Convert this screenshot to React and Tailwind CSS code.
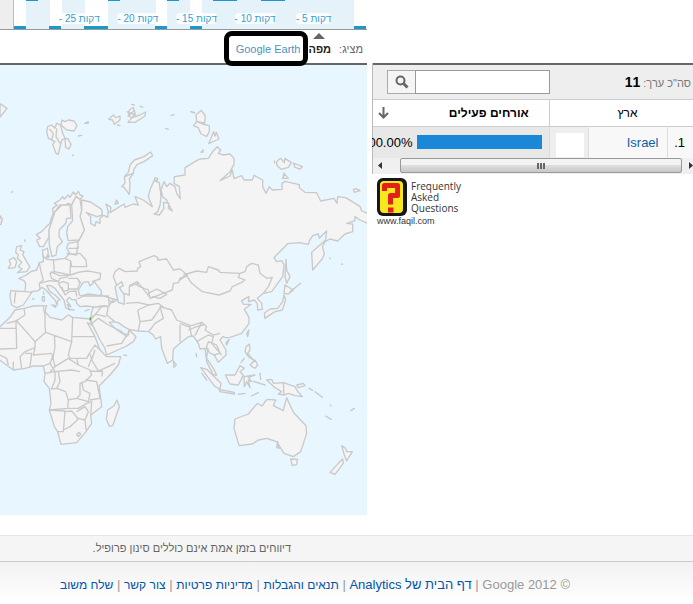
const chartLabels = ['25', '20', '15', '10', '5'];

const footerLinks = [
  'תנאים והגבלות',
  'מדיניות פרטיות',
  'צור קשר',
  'שלח משוב',
];

function RealtimeChart() {
  return (
    <div className="flex h-[30px] border-b border-[#999] bg-[#eee]">
      <div className="relative ml-[13px] flex-1 border-l border-[#bbb] bg-white">
        <svg className="block h-[29px] w-full" viewBox="0 0 353 29" preserveAspectRatio="none" shapeRendering="crispEdges">
          <path fill="#e5f2f9" d="M12 0h24v29H12zM48 0h23v29H48zM94 0h48v29H94zM153 0h23v29H153zM188 0h152v29H188z" />
          <path
            fill="#058dc7"
            fillOpacity="0.9"
            d="M0 26h12v3H0zM35 26h12v3H35zM70 26h24v3H70zM141 26h12v3H141zM176 26h12v3H176zM340 26h12v3H340zM12 0h12v1H12zM94 0h12v1H94zM153 0h12v1H153zM199 0h24v1H199zM247 0h24v1H247z"
          />
        </svg>
        <div className="absolute inset-0 grid grid-cols-5 pt-3 pr-6 pl-9 text-center text-[10px] leading-[14px] text-[#3a9fcb]">
          {chartLabels.map((n) => (
            <span key={n} dir="rtl">
              <span className="rounded-sm bg-white/80">דקות {n} -</span>
            </span>
          ))}
        </div>
      </div>
    </div>
  );
}

function MapTabs() {
  return (
    <nav dir="rtl" className="flex h-[35px] items-center gap-2 border-b-2 border-[#666] pt-1.5 pr-1 text-[11px]">
      <span className="text-[#666]">מציג:</span>
      <a href="#map" className="relative font-bold text-[#222]">
        <svg className="absolute -top-2 left-1 h-[6px] w-3" viewBox="0 0 12 6">
          <path d="M6 0L12 6H0z" fill="#666" />
        </svg>
        מפה
      </a>
      <a href="#earth" className="relative text-[#5092c4]">
        Google Earth
        <span className="absolute -top-[10px] -right-[7px] -bottom-2 -left-3 rounded-lg border-[5px] border-black" />
      </a>
    </nav>
  );
}

function WorldMap() {
  return (
    <svg className="block w-full bg-[#e8f6ff]" viewBox="0 0 1101 1350" role="img" aria-label="World map">
      <g fill="#f4f4f4" stroke="#c9c9c9" strokeWidth="4" strokeLinejoin="round">
        {/* Eurasia */}
        <path d="M245 405L272 411 305 433 307 450 290 455 258 442 272 455 272 475 285 483 288 470 300 475 300 460 312 451 323 457 325 440 318 417 333 427 330 443 372 417 375 427 400 417 415 420 405 395 430 405 457 425 445 395 450 375 462 347 478 353 483 395 480 420 473 440 462 447 478 450 492 430 490 412 507 415 505 430 517 438 507 420 500 405 488 395 483 375 492 350 500 365 510 355 525 365 530 385 541 402 538 365 522 355 523 335 555 330 555 308 590 287 600 282 625 280 640 257 652 245 662 255 655 265 670 270 690 267 702 280 702 298 690 320 660 347 690 333 697 315 702 341 725 332 732 345 757 345 762 331 788 345 788 365 798 385 808 365 817 375 846 373 846 355 855 349 898 359 898 368 915 382 950 383 962 408 1002 400 1011 415 1013 395 1037 398 1065 415 1080 424 1085 438 1103 445 1103 475 1080 465 1065 455 1065 467 1040 475 1058 477 1058 500 1035 507 1013 528 990 522 975 530 967 545 973 565 968 580 938 615 935 562 977 525 980 498 958 520 955 507 938 512 928 527 925 538 898 533 863 536 822 578 830 590 845 587 852 600 848 635 815 680 790 685 772 700 785 715 787 733 773 735 772 715 763 705 745 710 747 695 725 707 730 718 753 718 733 733 747 757 747 775 725 805 690 817 677 818 668 815 660 825 678 855 678 870 655 892 643 870 628 863 623 850 620 880 640 910 650 930 640 930 630 910 620 890 615 850 600 852 595 835 585 820 580 813 565 815 540 835 520 852 518 885 502 895 485 850 482 815 467 822 460 810 447 800 415 798 387 793 375 787 355 773 340 770 328 772 345 790 365 805 385 810 388 795 408 815 400 830 380 843 320 870 315 850 300 825 275 775 272 760 275 740 280 725 275 725 258 723 240 725 230 715 228 705 215 703 207 697 200 707 213 725 202 718 209 735 197 728 192 705 180 690 165 670 152 662 140 662 150 680 165 690 180 705 172 708 172 720 165 705 155 695 138 675 125 667 115 677 95 680 90 690 70 720 50 728 35 720 30 695 32 677 75 680 77 655 72 647 57 640 80 630 92 620 110 615 118 593 130 590 130 575 128 555 142 560 140 583 162 585 195 580 210 565 200 550 205 535 235 530 253 495 240 455 245 435z" />
        {/* Scandinavia */}
        <path d="M119 545L110 525 121 520 109 509 125 500 137 487 150 475 153 462 160 445 158 430 172 420 163 415 180 405 188 395 193 402 205 390 210 397 220 381 227 390 235 379 240 390 249 393 240 403 228 395 215 420 205 415 190 423 180 420 165 440 155 475 147 495 148 515 130 545z" />
        <path d="M147 495L165 440 185 420 210 420 213 459 200 460 197 475 178 495 177 515 187 530 172 545 168 570 156 575 148 540z" />
        <path d="M215 420L228 395 240 403 245 435 240 455 253 495 237 525 205 527 200 505 203 485 218 467z" />
        {/* British Isles */}
        <path d="M50 545L65 542 60 555 72 560 68 568 83 595 90 605 80 620 52 623 66 612 55 605 65 592 52 580 55 570 47 562z M27 585L42 578 50 590 45 608 25 610 32 597z" />
        {/* Arctic islands */}
        <path d="M0 116L21 130 0 156z M143 185L155 180 165 190 170 175 182 180 188 205 195 220 185 225 175 268 168 265 158 238 165 230 145 220 140 200z M148 192L160 205 155 225M170 190L168 215 180 235 M186 165L195 170 205 165 222 168 231 182 222 198 200 195 183 180z M195 222L203 220 213 238 207 252 197 247z M326 163L340 150 347 158 360 153 360 165 343 178 338 165z M384 172L396 158 420 150 437 141 435 153 405 172z M388 135L400 128 405 145 395 160 385 150z M380 140L408 150M383 155L405 135 M254 175L265 170 264 175z M235 213L245 211z M353 180L360 182z M513 151L522 149z M497 190L505 193z M0 452L7 462 3 478 -2 478z M34 382L38 380z M74 525L75 530z M395 118L403 120z M420 124L428 126z M218 272L220 270z" />
        <path d="M388 388L372 367 365 365 375 355 373 335 385 322 390 300 403 285 432 275 452 261 458 272 432 290 412 298 402 312 400 325 388 342 390 355z M375 335L398 325 M345 417L350 405 355 415z M463 345L465 338 473 340 472 347z" />
        <path d="M590 170L588 150 604 136 616 153 614 174z M580 182L590 170 607 177 628 182 628 200 620 214 603 207 595 188z M626 236L641 200 645 213 649 202 657 222z M572 140L584 142 582 144z M603 262L610 255 609 261z" />
        <path d="M830 290L842 280 853 293 855 280 874 293 865 307 843 313 830 300z M880 294L907 305 900 312 885 307z M847 340L855 328 865 340z M1060 374L1068 371 1080 377 1063 382z M852 323L850 333z M823 288L824 294z M990 579L991 581z M1025 597L1028 598z" />
        {/* Denmark */}
        <path d="M130 575L127 557 142 550 145 565 138 580z M143 570L148 573 145 578z" />
        {/* Africa */}
        <path d="M-8 790L0 785 30 757 45 735 72 730 100 723 140 722 135 740 150 757 185 765 205 750 218 757 270 762 275 780 262 773 285 815 300 855 320 875 362 875 355 900 330 930 297 963 302 1000 305 1025 272 1050 275 1075 258 1100 230 1133 183 1138 173 1100 163 1085 148 1035 153 1015 148 970 132 950 135 925 130 903 100 903 75 910 40 915 -8 880z" />
        <path d="M351 1005L358 1025 338 1082 328 1084 319 1062 323 1035 342 1023z M520 888L529 899 522 907z M372 870L380 871z M127 695L133 695 133 709 127 707z M130 680L132 688z M97 703L102 701z M155 720L168 722 167 727z M207 733L222 735z M255 738L267 733z" />
        {/* Japan, Korea and Sakhalin */}
        <path d="M858 583L860 615 870 635 860 655 855 635z M852 685L855 660 880 675 865 687z M852 690L857 705 847 735 825 740 812 748 795 760 793 745 810 732 833 730 848 710z M870 680L902 655z" />
        {/* South East Asia */}
        <path d="M740 805L747 795 743 815z M738 845L748 837 750 855 743 865 760 885 745 875 735 860z M750 900L765 885 773 900 765 910z M723 893L733 880z M602 908L620 913 663 955 660 972 645 965z M657 973L703 982 703 987 660 980z M676 930L705 930 720 902 733 910 720 920 730 930 715 960 690 957z M732 935L765 930 745 937 755 950 745 945 750 968 740 950 733 965z M678 833L688 823 680 840z M715 988L735 985z M755 993L775 983z M760 949L795 960z M780 925L782 943z M588 865L590 875z M605 925L620 945z" />
        <path d="M800 945L815 943 820 955 850 953 885 965 892 978 907 995 885 992 865 985 853 990 835 987 845 980 825 968z M850 953L852 990 M890 960L910 955 915 962 895 968z M927 970L938 976z M945 980L967 997z M977 1053L993 1063z M1052 1037L1063 1030z M991 1020L993 1023z" />
        {/* Australia and New Zealand */}
        <path d="M705 1062L745 1047 772 1015 787 1023 795 1010 802 1003 827 1005 820 1022 850 1037 860 998 880 1042 918 1082 920 1105 902 1160 880 1175 852 1165 830 1130 815 1125 800 1120 775 1125 757 1137 717 1142 702 1090z M830 1148L833 1130 837 1150z M872 1182L892 1183 890 1198 877 1202z M1025 1142L1037 1150 1040 1160 1057 1160 1040 1188 1033 1170z M1028 1182L1030 1195 1005 1228 990 1222 1015 1195z" />
      </g>
      {/* Inland seas */}
      <g fill="#e8f6ff" stroke="#c9c9c9" strokeWidth="4" strokeLinejoin="round">
        <path d="M238 690L235 675 250 652 265 650 270 663 283 650 305 680 302 692 265 687 245 693z" />
        <path d="M345 665L365 650 370 662 358 668 372 688 373 718 355 712 350 690z" />
      </g>
      {/* Country borders */}
      <g fill="none" stroke="#c9c9c9" strokeWidth="4" strokeLinejoin="round">
        <path d="M118 593L123 620 130 645 118 655 120 675M160 583L163 620 150 625 155 640 175 650M163 620L210 630 212 588 195 580M152 620L178 632 210 630M118 655L150 647 175 650 180 640 205 635M175 655L190 680 205 675 205 655 190 650 175 655M205 640L232 640 240 655 232 672 205 672M212 588L215 605 260 605 258 585 240 565 210 568M205 550L235 550 233 530M200 565L230 570 232 545M212 630L235 622 260 618 275 620 302 625 300 642 275 650M232 640L243 655M195 690L207 680 228 678 230 695M185 665L195 690M47 680L43 715M75 680L97 682" />
        <path d="M232 702L250 693 325 693 328 723 280 727M302 690L350 705 340 712 325 705M328 720L340 705M305 725L280 755 275 760M280 727L305 723 325 725 320 750 345 770M276 755L290 748 318 755M273 778L295 760 325 780 365 800M320 843L365 835 378 815 365 800M380 815L388 795" />
        <path d="M350 660L340 635 345 620 358 610 375 620 412 618 413 610 422 605 417 590 462 572 473 577 473 585 500 582 520 615 540 612 562 630 540 640 535 653 520 655 517 675 490 685 450 700 445 675 412 662 413 655 388 665 388 690 372 685" />
        <path d="M388 662L412 650 448 695 M378 715L412 712 447 720M413 735L420 770 415 798M447 720L475 715 490 727M413 735L447 720M420 770L455 765 470 745 485 720M445 685L470 672 500 688 480 700 455 695M447 798L465 775 490 760 480 725 515 735 530 765 568 780 575 815M562 630L540 645M565 795L590 785 610 780" />
        <path d="M550 630L590 618 620 622 625 605 655 615 660 622 720 625 735 620 740 605 755 595 775 600 780 625 800 640 817 637 805 665 790 685M560 632L575 655 607 680 657 690 690 678 697 665 725 652 735 645 715 637 720 625" />
        <path d="M540 775L565 785 605 772 620 785 615 795 640 810 660 805M605 772L585 812M590 830L625 810 640 815 635 835 665 870M617 855L625 830 650 840 660 865 640 870M540 780L540 830" />
        <path d="M72 730L75 750 48 768 20 775M48 765L105 830 137 802 135 780 135 750 130 725M0 790L48 790M48 768L50 850 0 852M105 830L105 848 75 860 60 875M137 802L215 830 218 757M218 815L285 815M215 830L205 870 210 880M163 810L165 845 158 885M105 850L100 870 155 865M75 865L95 865 90 905M60 875L65 910M40 890L40 915M0 870L20 880 25 900" />
        <path d="M155 865L165 905 205 880 235 900 270 915 275 930 255 950 240 955 240 990 230 1000M210 880L260 880 268 865 275 880 265 905M265 870L285 840 300 855M285 855L275 885 295 918 325 905 345 895M270 918L308 920 305 935M295 918L308 918M130 903L150 895 165 920 215 915 240 920M150 895L160 870M135 925L165 920 165 945 155 970M175 920L180 950 170 970 152 972M170 970L197 980 205 1005 203 1030 148 1035M203 1005L230 1000 265 1010 270 985 250 975 245 950M205 1030L235 1030 260 1015 275 1010 272 1050M148 1035L195 1038 190 1100 173 1100M195 1040L215 1038 235 1062 210 1085 190 1095M230 1040L255 1025 265 1040 255 1065 235 1060M255 1065L258 1095M255 945L290 950 300 1000 270 1005M230 1108L238 1102 242 1108 235 1115zM165 905L150 920M235 900L230 880" />
      </g>
      <path fill="#54ad54" d="M269 757h5v9h-5z" />
    </svg>
  );
}

function CountryTable() {
  return (
    <section className="min-w-0 overflow-hidden">
      <div className="border-l border-[#bbb]">
        <div className="flex h-9 items-center justify-between border-t-2 border-[#666] bg-[#eee] pr-0.5 pl-[14px]">
          <form className="flex h-6">
            <button type="button" aria-label="חיפוש" className="flex w-7 items-center justify-center border border-r-0 border-[#aaa] bg-[#f5f5f5]">
              <svg className="h-[14px] w-[14px]" viewBox="0 0 14 14" fill="none" stroke="#666">
                <circle cx="5.500" cy="5.500" r="4" strokeWidth="2" />
                <path d="M8.500 8.500L12.500 12.500" strokeWidth="3" />
              </svg>
            </button>
            <input type="text" aria-label="חיפוש מדינה" className="w-[135px] border border-[#999] bg-white px-1 text-xs" />
          </form>
          <p dir="rtl" className="text-[11px] text-[#777]">
            סה"כ ערך: <b className="text-sm text-black">11</b>
          </p>
        </div>
        <table dir="rtl" className="w-full table-fixed border-collapse text-[13px] text-black">
          <thead>
            <tr className="h-[27px] border-y border-[#ccc] bg-white text-xs">
              <th className="w-[26px]" aria-label="#" />
              <th className="w-[79px] font-normal">ארץ</th>
              <th className="w-[39px]" aria-label="דגל" />
              <th className="border-r border-[#ccc] pl-[5px]">
                <span className="flex items-center">
                  <span className="min-w-0 flex-1 pl-10">אורחים פעילים</span>
                  <svg className="h-3 w-[11px] shrink-0" viewBox="0 0 11 12" fill="none" stroke="#666" strokeWidth="2">
                    <path d="M5.500 0V10M1 6L5.500 10.500 10 6" />
                  </svg>
                </span>
              </th>
            </tr>
          </thead>
          <tbody>
            <tr className="h-[31px] bg-[#f8f8f8]">
              <td className="pr-2">1.</td>
              <td className="border-x border-[#ddd] pr-2">
                <a href="#israel" className="text-[#0f5fa8]">Israel</a>
              </td>
              <td className="bg-[#eee] pt-[6px] pr-1">
                <div className="h-[24px] w-7 bg-white" />
              </td>
              <td className="border-r border-[#ddd] bg-[#e8e8e8] pr-[7px]">
                <div className="flex items-center gap-1">
                  <div className="h-[14px] w-[125px] shrink-0 bg-[#1a87d7]" />
                  <span dir="ltr">100.00%</span>
                </div>
              </td>
            </tr>
          </tbody>
        </table>
        <div className="flex h-4 items-center bg-[#f0f0f0]">
          <svg className="mx-[5px] h-[7px] w-[5px]" viewBox="0 0 5 7">
            <path d="M4 0v7L0 3.500z" fill="#333" />
          </svg>
          <div className="ml-3 flex h-[15px] flex-1 items-center justify-center gap-px rounded-[2px] border border-[#999] bg-linear-to-b from-[#f3f3f3] from-45% via-[#dedede] via-50% to-[#c8c8c8]">
            <i className="h-[6px] w-0.5 bg-[#666]" />
            <i className="h-[6px] w-0.5 bg-[#666]" />
            <i className="h-[6px] w-0.5 bg-[#666]" />
          </div>
          <svg className="ml-[7px] h-[7px] w-1" viewBox="0 0 4 7">
            <path d="M0 0v7L4 3.500z" fill="#333" />
          </svg>
        </div>
      </div>
      <FaqLogo />
    </section>
  );
}

function FaqLogo() {
  return (
    <div className="mt-[3px] ml-[5px] w-[86px] font-['Open_Sans',sans-serif] text-[#333]">
      <div className="flex gap-1">
        <svg className="h-10 w-[30px] shrink-0" viewBox="0 0 30 40">
          <rect x="0" y="1" width="30" height="38" rx="6" fill="#161616" />
          <rect x="3" y="4" width="23" height="32" rx="4" fill="#f6e81c" />
          <path d="M7.500 14V8.500h13v10h-7v9M11 33h5.500" fill="none" stroke="#e32119" strokeWidth="5" strokeLinejoin="round" />
        </svg>
        <p className="pt-1 text-[10px] leading-[11px]">
          Frequently
          <br />
          Asked
          <br />
          Questions
        </p>
      </div>
      <p className="font-['Liberation_Sans',sans-serif] text-[9px] leading-[9px]">www.faqil.com</p>
    </div>
  );
}

export default function App() {
  return (
    <div className="flex min-h-screen flex-col bg-white font-['Liberation_Sans',Arial,sans-serif]">
      <main className="grid grid-cols-[367fr_321fr] gap-x-[5px] pb-5">
        <div className="min-w-0">
          <RealtimeChart />
          <MapTabs />
          <WorldMap />
        </div>
        <div className="min-w-0 pt-[63px]">
          <CountryTable />
        </div>
      </main>
      <p dir="rtl" className="border-t border-b border-t-[#e5e5e5] border-b-[#ccc] bg-[#f5f5f5] py-1 pr-[58%] text-[11px] leading-[17px] text-[#666]">
        דיווחים בזמן אמת אינם כוללים סינון פרופיל.
      </p>
      <footer dir="rtl" className="flex-1 bg-linear-to-b from-[#f2f2f2] to-white pt-[14px] pr-[123px] text-[13px] leading-[17px] whitespace-nowrap text-[#999]">
        © 2012 Google
        {' | '}
        <a href="#home" className="text-[#05a] hover:underline">דף הבית של Analytics</a>
        {footerLinks.map((label) => (
          <span key={label}>
            {' | '}
            <a href="#footer" className="text-xs text-[#05a] hover:underline">{label}</a>
          </span>
        ))}
      </footer>
    </div>
  );
}
